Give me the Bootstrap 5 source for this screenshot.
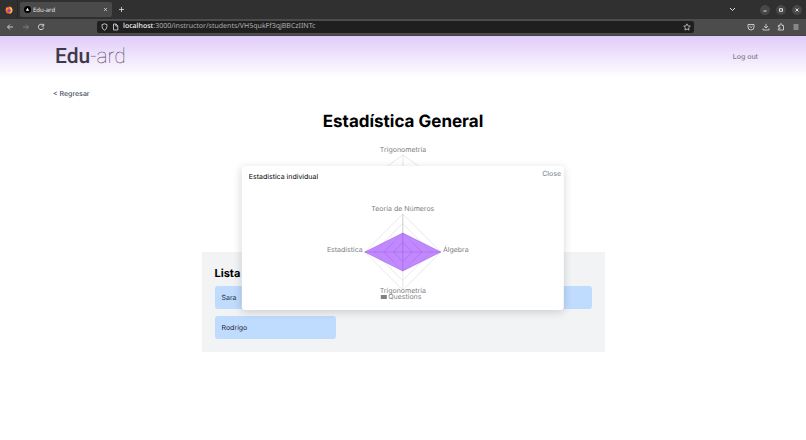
<!DOCTYPE html>
<html lang="es">
<head>
<meta charset="utf-8">
<meta name="viewport" content="width=device-width, initial-scale=1">
<title>Edu-ard</title>
<link href="https://cdn.jsdelivr.net/npm/bootstrap@5.3.0/dist/css/bootstrap.min.css" rel="stylesheet">
<style>
body{font-family:Inter,sans-serif;font-size:7px;line-height:10px;color:#111827;background:#fff;text-rendering:geometricPrecision}
button{font-family:inherit;text-rendering:inherit}
svg{display:block;flex-shrink:0}
.chrome{font-family:"Noto Sans",sans-serif;color:#e4e4e4}
.chrome svg{fill:none;stroke:#e2e2e2;stroke-width:1}
.tabstrip{height:19px;background:#303030;padding-right:4px}
.pinned{width:18px;border-right:1px solid #262626}
.browser-tab{width:92px;height:15px;background:#4a4a4a;border-radius:2px;padding:0 4px;gap:2px;margin-left:2px;font-size:6px}
.toolbar{height:17px;background:#4c4c4c;border-bottom:1px solid #444;padding:0 3px 0 6px}
.icon-btn{border:0;background:none;padding:0;display:flex;align-items:center;justify-content:center;width:15px;height:12px}
.new-tab{margin-left:2px}
.tab-menu{margin-right:20px}
.window-controls{gap:6px}
.win-btn{width:10px;height:10px;border-radius:50%;background:#484848}
.address{height:12px;background:#1f1f1f;border-radius:2px;padding:0 3px 0 4px;margin:0 49px;color:#b0b0b0;font-size:7px}
.address b{color:#f4f4f4;font-weight:500}
.site-header{height:42px;background:linear-gradient(#e0ccfa,#fff);padding:0 48px 0 55px}
.brand{font-family:Roboto,sans-serif;font-size:21px;line-height:28px;color:#403a48;font-weight:500}
.brand span{font-weight:100;color:#554b60}
.logout{font-size:7px;font-weight:500;color:#81788b}
.back-link{font-size:7px;font-weight:500;color:#475060;margin:11px 53px 0}
.main-title{font-size:17px;line-height:24px;font-weight:700;color:#000;margin:11px 0 0}
.chart text{font-size:7px;fill:#808080;text-anchor:middle}
.grid-lines{fill:none;stroke:#d2d2d2;stroke-width:.5}
.students{width:50%;background:#f2f3f5;padding:14px 13px 13px}
.students h2{font-size:11px;line-height:14px;font-weight:700;color:#000;margin:0 0 6px}
.student-row{--bs-gutter-x:7px;--bs-gutter-y:7px}
.student{height:23px;background:#bfdbfe;border:0;border-radius:3px;padding:0 7px;color:#1f2937;font-size:7px}
.dialog-box{width:40%;background:#fff;border-radius:3px;box-shadow:0 2px 8px rgba(0,0,0,.16);padding:3px 3px 7px 7px}
.dialog-box h3{font-size:7px;line-height:10px;font-weight:400;color:#000;margin:3px 0 0}
.dialog-box .chart{margin-top:1px}
.close-link{font-size:7px;line-height:10px;font-weight:500;color:#8b909b;border:0;background:none;padding:0}
</style>
<script src="https://cdn.jsdelivr.net/npm/bootstrap@5.3.0/dist/js/bootstrap.bundle.min.js"></script>
</head>
<body class="d-flex flex-column vh-100 overflow-hidden">
<div class="chrome">
  <div class="tabstrip d-flex align-items-center">
    <div class="pinned d-flex align-items-center justify-content-center align-self-stretch">
      <svg width="8" height="8" viewBox="0 0 8 8" style="stroke:none"><circle cx="4" cy="4.2" r="3.4" fill="#ff5a36"/><path d="M4.6.3C6 1 7.6 2.4 7.4 4.7 7 6.800 5.500 7.600 4 7.600 6 6 6 4 5 3Z" fill="#ffc933"/><path d="M1 1.500 2.300 2.200 4 2.300 3 3.500 1 4Z" fill="#ff9a2b"/><circle cx="4.100" cy="4.500" r="1.500" fill="#7b4bdc"/></svg>
    </div>
    <div class="browser-tab d-flex align-items-center">
      <svg width="7" height="7" viewBox="0 0 7 7" style="stroke:none"><circle cx="3.500" cy="3.500" r="3.500" fill="#000"/><path d="M3.500 1.800 5.200 4.700H1.800Z" fill="#fff"/></svg>
      <span class="flex-grow-1">Edu-ard</span>
      <button class="icon-btn w-auto" aria-label="Cerrar pestaña"><svg width="5" height="5" viewBox="0 0 5 5"><path d="M1 1 4 4M4 1 1 4" stroke-width=".7"/></svg></button>
    </div>
    <button class="icon-btn new-tab" aria-label="Nueva pestaña"><svg width="7" height="7" viewBox="0 0 7 7"><path d="M3.500 1V6M1 3.500H6" stroke-width=".8"/></svg></button>
    <button class="icon-btn ms-auto tab-menu" aria-label="Lista de pestañas"><svg width="7" height="5" viewBox="0 0 7 5"><path d="M1 1 3.500 3.500 6 1"/></svg></button>
    <div class="window-controls d-flex">
      <button class="icon-btn win-btn" aria-label="Minimizar"><svg width="6" height="6" viewBox="0 0 6 6"><path d="M1.500 4H4.500"/></svg></button>
      <button class="icon-btn win-btn" aria-label="Maximizar"><svg width="6" height="6" viewBox="0 0 6 6"><path d="M1.500 1.700H4.500V4.300H1.500Z"/></svg></button>
      <button class="icon-btn win-btn" aria-label="Cerrar"><svg width="6" height="6" viewBox="0 0 6 6"><path d="M1.500 1.500 4.500 4.500M4.500 1.500 1.500 4.500"/></svg></button>
    </div>
  </div>
  <div class="toolbar d-flex align-items-center">
    <button class="icon-btn w-auto" aria-label="Atrás"><svg width="8" height="8" viewBox="0 0 8 8"><path d="M7 4H1.500M4 1.500 1.500 4 4 6.500" stroke-width=".8"/></svg></button>
    <button class="icon-btn" aria-label="Adelante"><svg class="ms-2" width="8" height="8" viewBox="0 0 8 8" opacity=".4"><path d="M1 4H6.500M4 1.500 6.500 4 4 6.500" stroke-width=".8"/></svg></button>
    <button class="icon-btn ms-1" aria-label="Recargar"><svg width="8" height="8" viewBox="0 0 8 8"><path d="M6.300 2.400A2.700 2.700 0 1 0 6.700 4.500M6.700.8V3H4.500" stroke-width=".9"/></svg></button>
    <div class="address d-flex align-items-center flex-grow-1">
      <svg width="7" height="8" viewBox="0 0 7 8"><path d="M3.500.8 6 1.600C6 4.500 5.500 6.200 3.500 7.200 1.500 6.200 1 4.500 1 1.600Z" stroke-width=".8"/></svg>
      <svg class="ms-1 me-1" width="7" height="8" viewBox="0 0 7 8"><path d="M1.500 1H4L5.800 2.800V7H1.500ZM3.800 1V3H5.800" stroke-width=".8"/></svg>
      <span class="flex-grow-1"><b>localhost</b>:3000/instructor/students/VH5qukFf3qjBBCzIINTc</span>
      <svg width="8" height="8" viewBox="0 0 8 8"><path d="M4 .8 5 2.900 7.300 3.200 5.600 4.800 6 7.100 4 6 2 7.100 2.400 4.800.7 3.200 3 2.900Z" stroke-width=".7"/></svg>
    </div>
    <div class="d-flex">
      <button class="icon-btn" aria-label="Pocket"><svg width="8" height="8" viewBox="0 0 8 8"><path d="M1 1.500H7V4A3 3 0 0 1 1 4ZM2.500 3.200 4 4.600 5.500 3.200" stroke-width=".8"/></svg></button>
      <button class="icon-btn" aria-label="Descargas"><svg width="8" height="8" viewBox="0 0 8 8"><path d="M4 .8V5M2 3.200 4 5 6 3.200M1 5.500V7H7V5.500" stroke-width=".8"/></svg></button>
      <button class="icon-btn" aria-label="Extensiones"><svg width="8" height="8" viewBox="0 0 8 8"><path d="M1.300 2.500H3V1.700A1 1 0 0 1 5 1.700V2.500H6.500V7H1.300V5.800H2.200A.9.9 0 0 0 2.200 4H1.300Z" stroke-width=".8"/></svg></button>
      <button class="icon-btn" aria-label="Menú"><svg width="8" height="8" viewBox="0 0 8 8"><path d="M1.500 2H6.500M1.500 4H6.500M1.500 6H6.500" stroke-width=".8"/></svg></button>
    </div>
  </div>
</div>
<div class="position-relative flex-grow-1">
  <header class="site-header d-flex align-items-center justify-content-between">
    <a class="brand text-decoration-none" href="#">Edu<span>-ard</span></a>
    <a class="logout text-decoration-none" href="#">Log out</a>
  </header>
  <main class="d-flex flex-column">
    <a class="back-link text-decoration-none align-self-start" href="#">&lt; Regresar</a>
    <h1 class="main-title text-center">Estadística General</h1>
    <svg class="chart align-self-center" width="200" height="118" viewBox="0 0 200 118" role="img" aria-label="Estadística general">
      <text x="100" y="18">Trigonometría</text>
      <g class="grid-lines"><path d="M100 21 142 51 126 100H74L58 51ZM100 32 132 54 120 92H80L68 54Z"/><path d="M100 21V65M142 51 100 65 58 51M126 100 100 65 74 100"/></g>
    </svg>
    <section class="students align-self-center">
      <h2>Lista de estudiantes</h2>
      <div class="row row-cols-3 student-row">
        <div class="col"><button class="student d-block w-100 text-start">Sara</button></div>
        <div class="col"><button class="student d-block w-100 text-start" aria-label="Estudiante"></button></div>
        <div class="col"><button class="student d-block w-100 text-start" aria-label="Estudiante"></button></div>
        <div class="col"><button class="student d-block w-100 text-start">Rodrigo</button></div>
      </div>
    </section>
  </main>
  <div class="dialog-box position-absolute top-50 start-50 translate-middle" role="dialog" aria-labelledby="dialog-title">
    <div class="d-flex justify-content-between align-items-start">
      <h3 id="dialog-title">Estadística individual</h3>
      <button class="close-link">Close</button>
    </div>
    <svg class="chart mx-auto" width="160" height="120" viewBox="0 0 160 120" role="img" aria-labelledby="dialog-title">
      <g class="grid-lines"><path d="M78 31 116 69 78 107 40 69ZM78 40.500 106.500 69 78 97.500 49.500 69ZM78 50 97 69 78 88 59 69ZM78 59.500 87.500 69 78 78.500 68.500 69Z"/><path d="M78 31V107M40 69H116"/></g>
      <path d="M78 31V69" stroke="#d6d6d6"/>
      <path d="M78 50 116 69 78 88 40 69Z" fill="#a855ff" fill-opacity=".7" stroke="#9a63dc" stroke-width=".5"/>
      <path d="M78 50V88M40 69H116M78 59.500 87.500 69 78 78.500 68.500 69ZM68.500 59.500 59 69 68.500 78.500M87.500 59.500 97 69 87.500 78.500" fill="none" stroke="#8548cc" stroke-opacity=".4" stroke-width=".5"/>
      <text x="78" y="28">Teoría de Números</text>
      <text x="20" y="69">Estadística</text>
      <text x="131" y="69">Álgebra</text>
      <text x="78" y="110">Trigonometría</text>
      <rect x="56" y="112" width="6" height="4" fill="#808080"/>
      <text x="80" y="116">Questions</text>
    </svg>
  </div>
</div>
</body>
</html>
